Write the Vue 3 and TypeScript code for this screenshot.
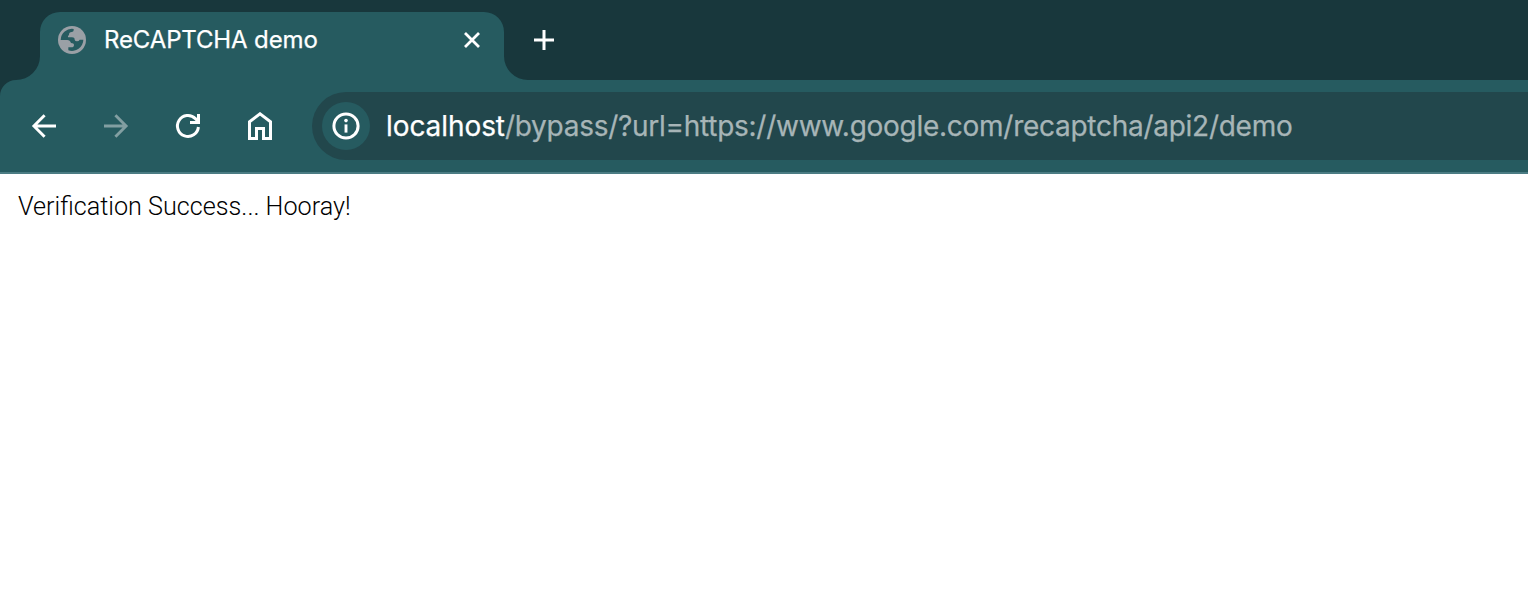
<script setup lang="ts">
const title = 'ReCAPTCHA demo'
const host = 'localhost'
const path = '/bypass/?url=https://www.google.com/recaptcha/api2/demo'
const message = 'Verification Success... Hooray!'
</script>

<template>
  <div class="browser">
    <header class="tab-strip">
      <svg class="shape" width="528" height="84" viewBox="0 0 528 84" aria-hidden="true">
        <path d="M0 84V80H16A24 24 0 0 0 40 56V32A20 20 0 0 1 60 12H484A20 20 0 0 1 504 32V56A24 24 0 0 0 528 80V84Z" fill="#265b60" />
      </svg>
      <div class="tab">
        <svg width="28" height="28" viewBox="174 78 84 84" aria-hidden="true">
          <circle cx="216" cy="120" r="42" fill="#9aa0a6" />
          <path d="M182 120A34 34 0 0 1 221 87V91Q221 96 215 96Q207 96 207 104Q207 107 204 107V112H216Q224 112 224 119Q225 124 231 124Q237 124 239 119H250A34 34 0 0 1 205 151V142H214Q222 142 222 135Q222 129 213 129Q210 120 202 120Z" fill="#265b60" />
        </svg>
        <span class="title">{{ title }}</span>
        <button class="close" aria-label="Close tab">
          <svg width="16" height="16" viewBox="0 0 16 16"><path d="M1 1L15 15M15 1L1 15" fill="none" stroke="#fff" stroke-width="2.8" /></svg>
        </button>
      </div>
      <button class="new-tab" aria-label="New tab">
        <svg width="20" height="20" viewBox="0 0 20 20"><path d="M0 10H20M10 0V20" stroke="#fff" stroke-width="3" /></svg>
      </button>
    </header>

    <div class="toolbar-back">
      <nav class="toolbar">
        <button aria-label="Back">
          <svg width="28" height="28" viewBox="0 0 28 28"><path d="M26 14H5M14.6 3.2L3.9 14L14.6 24.8" fill="none" stroke="#fff" stroke-width="2.9" /></svg>
        </button>
        <button aria-label="Forward">
          <svg width="28" height="28" viewBox="0 0 28 28"><path d="M2 14H23M13.4 3.2L24.1 14L13.4 24.8" fill="none" stroke="#829fa2" stroke-width="2.9" /></svg>
        </button>
        <button aria-label="Reload">
          <svg width="28" height="28" viewBox="0 0 28 28"><path d="M24.4 15A10.5 10.5 0 1 1 21.4 6.6L24.5 9.7M24.5 2V10.4H16" fill="none" stroke="#fff" stroke-width="3" /></svg>
        </button>
        <button aria-label="Home">
          <svg width="28" height="28" viewBox="0 0 28 28"><path d="M3.5 26.5V9.7L14 1.8L24.5 9.7V26.5H17.5V16.5H10.5V26.5Z" fill="none" stroke="#fff" stroke-width="3" /></svg>
        </button>
        <div class="omnibox">
          <button class="info" aria-label="View site information">
            <svg width="28" height="28" viewBox="0 0 28 28">
              <circle cx="14" cy="14" r="12.1" fill="none" stroke="#fff" stroke-width="3" />
              <path d="M14 12.4V20.6" stroke="#fff" stroke-width="2.9" />
              <circle cx="14" cy="8.6" r="1.8" fill="#fff" />
            </svg>
          </button>
          <div class="url"><span class="host">{{ host }}</span><span class="path">{{ path }}</span></div>
        </div>
      </nav>
    </div>

    <main class="page">{{ message }}</main>
  </div>
</template>

<style>
body {
  margin: 0;
  background: #fff;
}
</style>

<style scoped>
.browser {
  width: 100%;
  height: 610px;
  overflow: hidden;
  background: #fff;
}
button {
  display: flex;
  align-items: center;
  justify-content: center;
  padding: 0;
  border: 0;
  background: none;
}
svg {
  display: block;
  flex: none;
}
.tab-strip {
  position: relative;
  display: flex;
  align-items: center;
  box-sizing: border-box;
  height: 80px;
  padding-left: 40px;
  background: #18373c;
  overflow: hidden;
}
.shape {
  position: absolute;
  left: 0;
  top: 0;
}
.tab {
  position: relative;
  display: flex;
  align-items: center;
  box-sizing: border-box;
  width: 464px;
  padding: 0 20px 0 18px;
}
.title {
  flex: 1;
  margin-left: 18px;
  font: 400 24px/32px Inter, "Liberation Sans", sans-serif;
  letter-spacing: -0.14px;
  color: #fff;
  -webkit-text-stroke: 0.25px #fff;
  white-space: nowrap;
}
.close {
  width: 24px;
  height: 24px;
}
.new-tab {
  width: 40px;
  height: 40px;
  margin-left: 20px;
}
.toolbar-back {
  background: #18373c;
}
.toolbar {
  display: flex;
  align-items: center;
  box-sizing: border-box;
  height: 94px;
  padding-left: 8px;
  border-bottom: 2px solid #4b7c83;
  border-top-left-radius: 16px;
  background: #265b60;
}
.toolbar > button {
  width: 72px;
  height: 72px;
  flex: none;
}
.omnibox {
  display: flex;
  align-items: center;
  box-sizing: border-box;
  flex: 1;
  height: 68px;
  margin-left: 16px;
  padding-left: 10px;
  border-radius: 34px 0 0 34px;
  background: #22474c;
}
.info {
  width: 48px;
  height: 48px;
  border-radius: 50%;
  background: #265b60;
}
.url {
  margin-left: 16px;
  font: 400 28px/36px Inter, "Liberation Sans", sans-serif;
  white-space: nowrap;
}
.host {
  letter-spacing: -0.08px;
  color: #fff;
  -webkit-text-stroke: 0.25px #fff;
}
.path {
  letter-spacing: -0.27px;
  color: #a7b5b7;
  -webkit-text-stroke: 0.25px #a7b5b7;
}
.page {
  padding: 17px 18px;
  font: 300 25.2px/32px Roboto, sans-serif;
  color: #000;
}
</style>
